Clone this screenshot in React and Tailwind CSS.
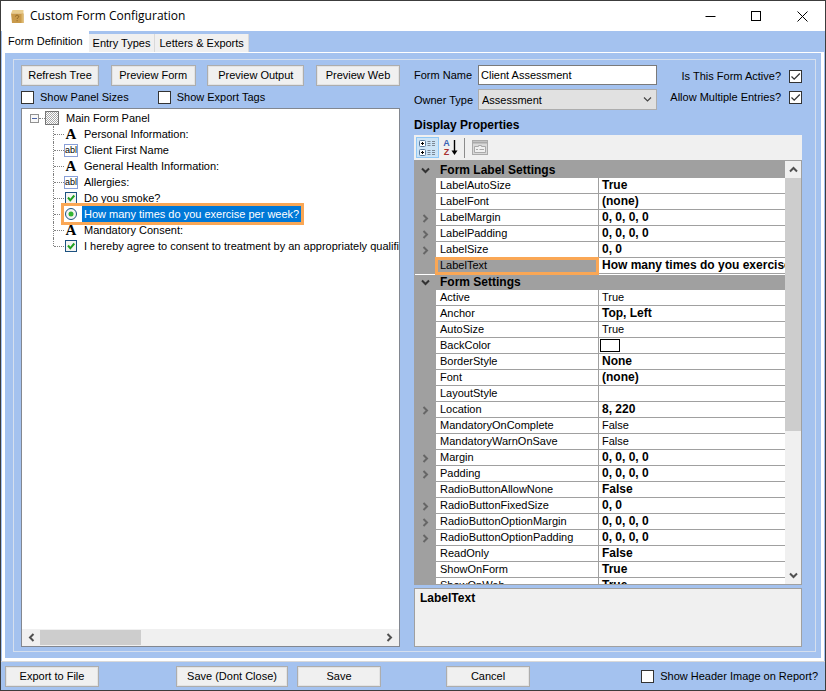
import { useState } from "react";

const tabs = ["Form Definition", "Entry Types", "Letters & Exports"];

const treeItems = [
  { icon: "label", text: "Personal Information:" },
  { icon: "textbox", text: "Client First Name" },
  { icon: "label", text: "General Health Information:" },
  { icon: "textbox", text: "Allergies:" },
  { icon: "check", text: "Do you smoke?" },
  { icon: "radio", text: "How many times do you exercise per week?", selected: true },
  { icon: "label", text: "Mandatory Consent:" },
  { icon: "check", text: "I hereby agree to consent to treatment by an appropriately qualified" },
];

const propertyGroups = [
  {
    title: "Form Label Settings",
    rows: [
      { name: "LabelAutoSize", value: "True", bold: true },
      { name: "LabelFont", value: "(none)", bold: true },
      { name: "LabelMargin", value: "0, 0, 0, 0", bold: true, expandable: true },
      { name: "LabelPadding", value: "0, 0, 0, 0", bold: true, expandable: true },
      { name: "LabelSize", value: "0, 0", bold: true, expandable: true },
      { name: "LabelText", value: "How many times do you exercise", bold: true, selected: true },
    ],
  },
  {
    title: "Form Settings",
    rows: [
      { name: "Active", value: "True" },
      { name: "Anchor", value: "Top, Left", bold: true },
      { name: "AutoSize", value: "True" },
      { name: "BackColor", swatch: true },
      { name: "BorderStyle", value: "None", bold: true },
      { name: "Font", value: "(none)", bold: true },
      { name: "LayoutStyle", value: "" },
      { name: "Location", value: "8, 220", bold: true, expandable: true },
      { name: "MandatoryOnComplete", value: "False" },
      { name: "MandatoryWarnOnSave", value: "False" },
      { name: "Margin", value: "0, 0, 0, 0", bold: true, expandable: true },
      { name: "Padding", value: "0, 0, 0, 0", bold: true, expandable: true },
      { name: "RadioButtonAllowNone", value: "False", bold: true },
      { name: "RadioButtonFixedSize", value: "0, 0", bold: true, expandable: true },
      { name: "RadioButtonOptionMargin", value: "0, 0, 0, 0", bold: true, expandable: true },
      { name: "RadioButtonOptionPadding", value: "0, 0, 0, 0", bold: true, expandable: true },
      { name: "ReadOnly", value: "False", bold: true },
      { name: "ShowOnForm", value: "True", bold: true },
      { name: "ShowOnWeb", value: "True", bold: true },
    ],
  },
];

const chevrons = {
  up: "M1 6.5L4.5 3L8 6.5",
  down: "M1 2.5L4.5 6L8 2.5",
  left: "M6.5 1L3 4.5L6.5 8",
  right: "M2.5 1L6 4.5L2.5 8",
};

function Chevron({ dir, className = "text-[#505050]", thick = 2 }) {
  return (
    <svg width="9" height="9" viewBox="0 0 9 9" fill="none" stroke="currentColor" strokeWidth={thick} className={className}>
      <path d={chevrons[dir]} />
    </svg>
  );
}

function WinButton({ children, className = "" }) {
  return (
    <button
      type="button"
      className={`h-[21px] shrink-0 border border-[#adadad] bg-[#f0f0f0] text-center leading-[19px] whitespace-nowrap shadow-[inset_0_0_0_1px_#e3e3e3] ${className}`}
    >
      {children}
    </button>
  );
}

function CheckBox({ id, label, checked = false, labelFirst = false }) {
  const [on, setOn] = useState(checked);
  return (
    <div className={`flex items-center ${labelFirst ? "flex-row-reverse gap-[8px]" : "gap-[6px]"}`}>
      <span className="relative flex h-[13px] w-[13px]">
        <input
          id={id}
          type="checkbox"
          checked={on}
          onChange={(e) => setOn(e.target.checked)}
          className="h-[13px] w-[13px] appearance-none border border-[#333] bg-white"
        />
        {on && (
          <svg viewBox="0 0 13 13" className="pointer-events-none absolute inset-0" fill="none" stroke="#333" strokeWidth="1.3">
            <path d="M2.5 6.5L5.2 9.2L10.8 3.5" />
          </svg>
        )}
      </span>
      <label htmlFor={id} className="leading-[14px] whitespace-nowrap">
        {label}
      </label>
    </div>
  );
}

function TreeIcon({ type }) {
  if (type === "label") {
    return <span className="w-[14px] text-center font-['Liberation_Serif',serif] text-[15px] leading-4 font-bold">A</span>;
  }
  if (type === "textbox") {
    return (
      <span className="h-[13px] w-[14px] border border-[#8aa0d8] bg-white text-center text-[9px] leading-[11px]">
        abl
      </span>
    );
  }
  if (type === "check") {
    return (
      <svg width="14" height="14" viewBox="0 0 14 14" fill="none">
        <rect x="1.5" y="1.5" width="11" height="11" fill="#f4f4f2" stroke="#1c5180" />
        <path d="M4 6.5L6.3 9.3L10.3 4.5" stroke="#21a121" strokeWidth="2" />
      </svg>
    );
  }
  return (
    <svg width="14" height="14" viewBox="0 0 14 14" fill="none">
      <circle cx="7" cy="7" r="5.5" fill="#f4f4f2" stroke="#1c5180" />
      <circle cx="7" cy="7" r="2.5" fill="#32b432" />
    </svg>
  );
}

function TitleBar() {
  return (
    <header className="flex h-[30px] shrink-0 items-center bg-white pl-[9px]">
      <svg width="15" height="15" viewBox="0 0 15 15">
        <path d="M2.5 1H13.5V4.5H1Z" fill="#e9cd8e" />
        <path d="M1 4.5H13.5V14H2Z" fill="#c99a4b" />
        <path d="M11.5 4.5H13.5V14H11.5Z" fill="#dcb76c" />
        <path d="M5.5 7.5C5.5 5.8 8.7 5.8 8.7 7.6C8.7 8.8 7.1 8.8 7.1 10M7.1 11.2V12.2" stroke="#8d6526" fill="none" />
      </svg>
      <h1 className="ml-[5px] flex-1 font-['Open_Sans',sans-serif] text-[12px] leading-4">Custom Form Configuration</h1>
      <button type="button" aria-label="Minimize" className="flex h-full w-[46px] items-center justify-center">
        <svg width="11" height="11" viewBox="0 0 11 11" stroke="#000">
          <path d="M0.5 5.5H10.5" />
        </svg>
      </button>
      <button type="button" aria-label="Maximize" className="flex h-full w-[46px] items-center justify-center">
        <svg width="11" height="11" viewBox="0 0 11 11" stroke="#000" fill="none">
          <rect x="0.5" y="0.5" width="9" height="9" />
        </svg>
      </button>
      <button type="button" aria-label="Close" className="flex h-full w-[46px] items-center justify-center">
        <svg width="11" height="11" viewBox="0 0 11 11" stroke="#000">
          <path d="M0.5 0.5L10.5 10.5M10.5 0.5L0.5 10.5" />
        </svg>
      </button>
    </header>
  );
}

function FormTree() {
  return (
    <div className="flex min-h-0 flex-1 flex-col border border-[#828790] bg-white">
      <div className="min-h-0 flex-1 overflow-hidden pt-px pl-2">
        <div className="flex h-4 items-center">
          <svg width="9" height="9" viewBox="0 0 9 9" fill="none">
            <rect x="0.5" y="0.5" width="8" height="8" fill="#f8f8f8" stroke="#919191" />
            <path d="M2 4.5H7" stroke="#4b63a7" />
          </svg>
          <span className="w-[6px] border-t border-dotted border-[#808080]" />
          <svg width="14" height="14" viewBox="0 0 14 14">
            <defs>
              <pattern id="dither" width="2" height="2" patternUnits="userSpaceOnUse">
                <rect width="2" height="2" fill="#fff" />
                <rect width="1" height="1" fill="#a8a8a8" />
                <rect x="1" y="1" width="1" height="1" fill="#a8a8a8" />
              </pattern>
            </defs>
            <rect x="0.5" y="0.5" width="13" height="13" fill="url(#dither)" stroke="#000" strokeDasharray="1 1" />
          </svg>
          <span className="ml-[7px] whitespace-nowrap">Main Form Panel</span>
        </div>
        <ul className="ml-[23px]">
          {treeItems.map((item, i) => (
            <li key={item.text} className="flex h-4 items-center">
              <span
                className={`w-px shrink-0 border-l border-dotted border-[#808080] ${
                  i === treeItems.length - 1 ? "h-2 self-start" : "h-4"
                }`}
              />
              <span className="w-[10px] shrink-0 border-t border-dotted border-[#808080]" />
              <span className="relative flex h-4 items-center">
                <span className="flex w-[14px] shrink-0 justify-center">
                  <TreeIcon type={item.icon} />
                </span>
                <span
                  className={`ml-[4px] h-4 px-[2px] leading-4 whitespace-nowrap ${item.selected ? "bg-[#0078d7] text-white" : ""}`}
                >
                  {item.text}
                </span>
                {item.selected && <span className="absolute -inset-[3px] border-[3px] border-[#faa755]" />}
              </span>
            </li>
          ))}
        </ul>
      </div>
      <div className="flex h-[17px] shrink-0 bg-[#f0f0f0] p-px">
        <button type="button" aria-label="Scroll left" className="flex w-[17px] items-center justify-center">
          <Chevron dir="left" />
        </button>
        <div className="flex-1">
          <div className="h-full w-[101px] bg-[#cdcdcd]" />
        </div>
        <button type="button" aria-label="Scroll right" className="flex w-[17px] items-center justify-center">
          <Chevron dir="right" />
        </button>
      </div>
    </div>
  );
}

function GridToolbar() {
  return (
    <div className="flex h-[25px] shrink-0 items-center bg-[#f0f0f0] pl-[2px]">
      <button
        type="button"
        aria-label="Categorized"
        className="flex h-[21px] w-[23px] items-center justify-center border border-[#90c8f6] bg-[#cce4f7]"
      >
        <svg width="17" height="17" viewBox="0 0 17 17" fill="none">
          <rect x="0.5" y="1.5" width="6" height="6" rx="1" fill="#fff" stroke="#5b7a9c" />
          <rect x="0.5" y="10.5" width="6" height="6" rx="1" fill="#fff" stroke="#5b7a9c" />
          <path d="M2 4.5H5M3.5 3V6M2 13.5H5M3.5 12V15" stroke="#000" />
          <path d="M8.5 2.5H11.5M13 2.5H16M8.5 4.5H11.5M13 4.5H16M8.5 6.5H11.5M13 6.5H16" stroke="#7b8794" />
          <path d="M8.5 11.5H11.5M13 11.5H16M8.5 13.5H11.5M13 13.5H16M8.5 15.5H11.5M13 15.5H16" stroke="#7b8794" />
        </svg>
      </button>
      <button
        type="button"
        aria-label="Alphabetical"
        className="flex h-[21px] w-[23px] items-center justify-center gap-px text-[9px] leading-[9px] font-bold"
      >
        <span className="flex flex-col">
          <span className="text-[#3a62b5]">A</span>
          <span className="text-[#a83232]">Z</span>
        </span>
        <svg width="7" height="16" viewBox="0 0 7 16">
          <path d="M3.5 0V12" stroke="#000" strokeWidth="1.4" />
          <path d="M0.5 10.5H6.5L3.5 15Z" />
        </svg>
      </button>
      <span className="ml-[2px] h-[20px] w-px bg-[#8c8c8c]" />
      <button type="button" aria-label="Property pages" className="ml-[3px] flex h-[21px] w-[23px] items-center justify-center">
        <svg width="16" height="15" viewBox="0 0 16 15" fill="none" stroke="#a9a9a9">
          <rect x="0.5" y="0.5" width="15" height="14" fill="#d9d9d9" />
          <path d="M1 2.5H15" strokeWidth="2" />
          <path d="M2.5 6.5H6.5V5.5H9.5V6.5H13.5V12.5H2.5Z" fill="#f0f0f0" />
          <path d="M4 9.5H6M7.5 9.5H12" />
        </svg>
      </button>
    </div>
  );
}

function PropertyGrid() {
  return (
    <div className="flex min-h-0 flex-1 border border-[#a0a0a0] bg-[#a0a0a0]">
      <div className="min-w-0 flex-1 overflow-hidden pt-px">
        <table className="w-full table-fixed border-separate border-spacing-0 text-left">
          <colgroup>
            <col className="w-[21px]" />
            <col className="w-[163px]" />
            <col />
          </colgroup>
          {propertyGroups.map((group, g) => (
            <tbody key={group.title}>
              <tr>
                <td className={`h-4 p-0 ${g > 0 ? "border-t border-white" : ""}`}>
                  <span className="flex justify-center">
                    <Chevron dir="down" className="text-[#333]" />
                  </span>
                </td>
                <th
                  colSpan={2}
                  className={`h-4 p-0 pl-[4px] text-[12px] leading-[15px] font-bold ${g > 0 ? "border-t border-white" : ""}`}
                >
                  {group.title}
                </th>
              </tr>
              {group.rows.map((row) => (
                <tr key={row.name}>
                  <td className="h-4 p-0">
                    <span className="flex justify-center">
                      {row.expandable && <Chevron dir="right" className="text-[#666]" />}
                    </span>
                  </td>
                  <th
                    className={`relative h-4 border-r border-b border-[#a0a0a0] p-0 pl-[4px] leading-[15px] font-normal ${
                      row.selected ? "bg-[#a0a0a0]" : "bg-white"
                    }`}
                  >
                    {row.name}
                    {row.selected && <span className="absolute -inset-x-px -top-px -bottom-[2px] border-[3px] border-[#faa755]" />}
                  </th>
                  <td
                    className={`h-4 overflow-hidden border-b border-[#a0a0a0] bg-white p-0 leading-[15px] whitespace-nowrap ${
                      row.swatch ? "pl-px" : "pl-[3px]"
                    } ${row.bold ? "text-[12px] font-bold" : ""}`}
                  >
                    {row.swatch ? <span className="block h-[13px] w-5 border border-black bg-white" /> : row.value}
                  </td>
                </tr>
              ))}
            </tbody>
          ))}
        </table>
      </div>
      <div className="flex w-4 shrink-0 flex-col bg-[#f0f0f0]">
        <button type="button" aria-label="Scroll up" className="flex h-[17px] items-center justify-center">
          <Chevron dir="up" />
        </button>
        <div className="flex-1">
          <div className="h-[65%] bg-[#cdcdcd]" />
        </div>
        <button type="button" aria-label="Scroll down" className="flex h-[17px] items-center justify-center">
          <Chevron dir="down" />
        </button>
      </div>
    </div>
  );
}

export default function App() {
  const [tab, setTab] = useState(tabs[0]);

  return (
    <div className="flex h-screen flex-col overflow-hidden border border-[#3c3c3c] bg-[#a4c2ef] font-['Liberation_Sans',Arial,sans-serif] text-[11px] leading-4 text-black">
      <TitleBar />

      <div role="tablist" className="flex h-[21px] shrink-0 items-end pl-px">
        {tabs.map((t) => (
          <button
            key={t}
            type="button"
            role="tab"
            aria-selected={t === tab}
            onClick={() => setTab(t)}
            className={`whitespace-nowrap ${
              t === tab ? "h-[21px] bg-white px-[6px] pb-[2px]" : "h-[18px] border-r border-[#d9d9d9] bg-[#f0f0f0] px-1"
            }`}
          >
            {t}
          </button>
        ))}
      </div>

      {/* Tab page */}
      <main className="mx-px flex min-h-0 flex-1 flex-col border-x-[3px] border-t border-b-[3px] border-white p-[6px] pr-[5px] pl-[8px]">
        <div className="grid min-h-0 flex-1 grid-cols-[minmax(0,379fr)_minmax(0,388fr)] grid-rows-[minmax(0,1fr)] gap-[14px] border border-[#d5dfee] pt-[5px] pr-[13px] pb-1 pl-[7px]">
          <section className="flex min-h-0 flex-col">
            <div className="flex justify-between">
              <WinButton className="w-[78px]">Refresh Tree</WinButton>
              <WinButton className="w-[85px]">Preview Form</WinButton>
              <WinButton className="w-[97px]">Preview Output</WinButton>
              <WinButton className="w-[84px]">Preview Web</WinButton>
            </div>
            <div className="flex h-[22px] items-center gap-[29px]">
              <CheckBox id="panel-sizes" label="Show Panel Sizes" />
              <CheckBox id="export-tags" label="Show Export Tags" />
            </div>
            <FormTree />
          </section>

          <section className="flex min-h-0 flex-col">
            <div className="flex justify-between">
              <div className="grid grid-cols-[64px_179px] items-center gap-y-[4px] whitespace-nowrap">
                <label htmlFor="form-name">Form Name</label>
                <input
                  id="form-name"
                  type="text"
                  defaultValue="Client Assessment"
                  className="h-5 border border-[#7a7a7a] bg-white px-[2px]"
                />
                <label htmlFor="owner-type">Owner Type</label>
                <div className="relative h-[21px]">
                  <select
                    id="owner-type"
                    defaultValue="Assessment"
                    className="h-full w-full appearance-none border border-[#adadad] bg-[#e1e1e1] px-[3px]"
                  >
                    <option>Assessment</option>
                  </select>
                  <Chevron dir="down" className="pointer-events-none absolute top-[6px] right-[5px] text-[#444]" thick={1.2} />
                </div>
              </div>
              <div className="flex flex-col items-end gap-[7px] pt-[4px]">
                <CheckBox id="form-active" label="Is This Form Active?" checked labelFirst />
                <CheckBox id="multiple-entries" label="Allow Multiple Entries?" checked labelFirst />
              </div>
            </div>

            <h2 className="pt-[8px] pb-[2px] text-[12px] leading-[15px] font-bold">Display Properties</h2>
            <GridToolbar />
            <PropertyGrid />
            <div className="mt-[3px] h-[59px] shrink-0 border border-[#a0a0a0] bg-[#f0f0f0] px-[5px] py-px text-[12px] font-bold">
              LabelText
            </div>
          </section>
        </div>
      </main>

      <footer className="flex h-[29px] shrink-0 items-center border-t border-[#d9d9d9] px-1 pr-[7px]">
        <WinButton className="w-[94px]">Export to File</WinButton>
        <WinButton className="ml-[77px] w-[112px]">Save (Dont Close)</WinButton>
        <WinButton className="ml-[9px] w-[84px]">Save</WinButton>
        <WinButton className="ml-[65px] w-[84px]">Cancel</WinButton>
        <div className="ml-auto">
          <CheckBox id="header-image" label="Show Header Image on Report?" />
        </div>
      </footer>
    </div>
  );
}
